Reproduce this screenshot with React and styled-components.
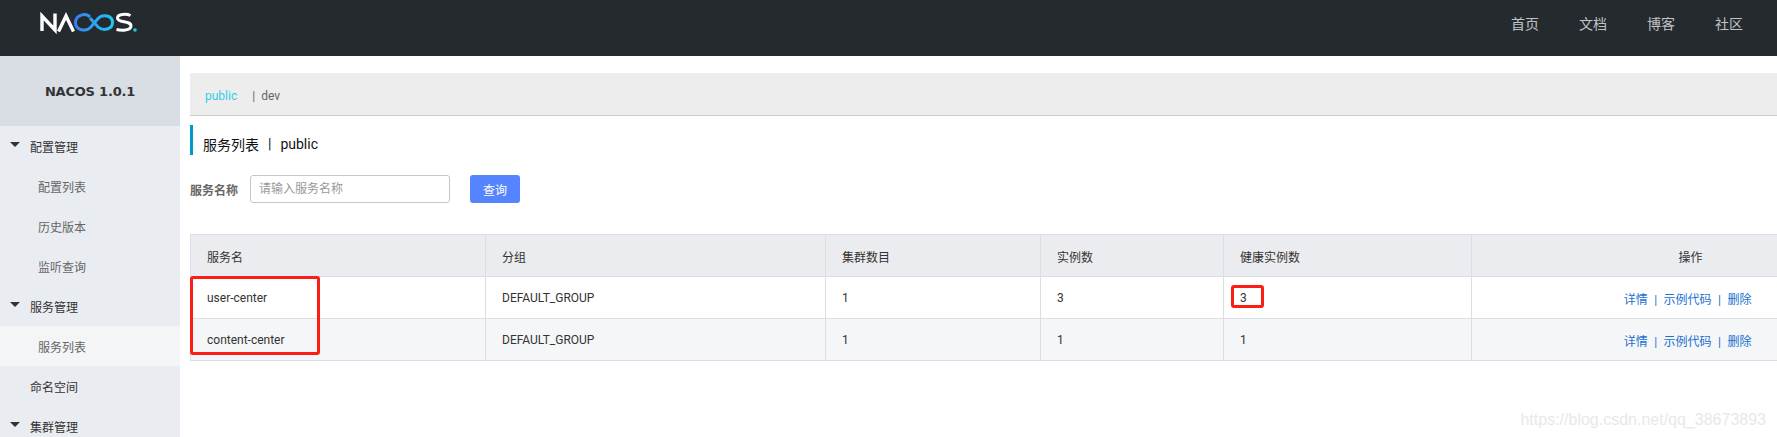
import styled, { createGlobalStyle } from "styled-components";

const CJK = `Roboto, "Noto Sans CJK SC", sans-serif`;

const GlobalStyled = createGlobalStyle`
  * {
    box-sizing: border-box;
  }

  html,
  body {
    margin: 0;
    height: 437px;
    overflow: hidden;
    background-color: #ffffff;
    font-family: ${CJK};
  }
`;

const Header = styled.header`
  height: 56px;
  background-color: #252a2f;
  display: flex;
  align-items: flex-start;
  justify-content: space-between;
  padding: 0 34px 0 40px;
`;

const LogoSvg = styled.svg`
  margin-top: 12px;
  display: block;
`;

const Nav = styled.nav`
  display: flex;
  gap: 40px;
  height: 46px;
  align-items: center;
`;

const NavLink = styled.a`
  font-size: 14px;
  color: #c0c3c6;
`;

const Body = styled.div`
  display: flex;
  height: 381px;
  overflow: hidden;
`;

const Sidebar = styled.aside`
  width: 180px;
  flex: none;
  background-color: #e9ecf1;
`;

const Version = styled.div`
  height: 70px;
  background-color: #d9dde4;
  display: flex;
  align-items: center;
  justify-content: center;
  font-family: "DejaVu Sans", sans-serif;
  font-weight: bold;
  font-size: 13px;
  letter-spacing: -0.2px;
  color: #333333;
`;

const MenuItem = styled.div`
  height: 40px;
  display: flex;
  align-items: center;
  font-size: 12px;
  padding-top: 1px;
  padding-left: ${({ $child }) => ($child ? "38px" : "30px")};
  color: ${({ $child }) => ($child ? "#666666" : "#333333")};
  background-color: ${({ $active }) => ($active ? "#f3f5f7" : "transparent")};
  position: relative;
`;

const Caret = styled.span`
  position: absolute;
  left: 10px;
  top: 16px;
  width: 0;
  height: 0;
  border-left: 5px solid transparent;
  border-right: 5px solid transparent;
  border-top: 5px solid #333333;
`;

const Main = styled.main`
  flex: 1;
  min-width: 0;
  padding: 17px 0 0 10px;
`;

const TabBar = styled.div`
  height: 43px;
  background-color: #ededed;
  border-bottom: 1px solid #cccccc;
  display: flex;
  align-items: center;
  padding: 4px 0 0 15px;
  font-size: 12px;
  color: #666666;
`;

const ActiveTab = styled.span`
  color: #33cde5;
  margin-right: 15px;
`;

const TabSep = styled.span`
  margin-right: 6px;
`;

const TitleBar = styled.div`
  margin-top: 9px;
  height: 30px;
  border-left: 3px solid #0099cc;
  padding: 7px 0 0 10px;
  font-size: 14px;
  color: #111111;
  display: flex;
  align-items: center;
  gap: 9px;
`;

const SearchForm = styled.form`
  margin-top: 20px;
  display: flex;
  align-items: center;
  height: 28px;
`;

const FieldLabel = styled.label`
  width: 60px;
  font-size: 12px;
  font-weight: bold;
  color: #666666;
`;

const SearchInput = styled.input`
  width: 200px;
  height: 28px;
  border: 1px solid #c4c6cf;
  border-radius: 3px;
  padding: 0 8px;
  font-family: ${CJK};
  font-size: 12px;
  outline: none;

  &::placeholder {
    color: #999999;
  }
`;

const SearchButton = styled.button`
  margin-left: 20px;
  width: 50px;
  height: 28px;
  border: none;
  border-radius: 3px;
  background-color: #5584ff;
  color: #ffffff;
  font-family: ${CJK};
  font-size: 12px;
`;

const TableWrap = styled.div`
  margin-top: 31px;
  position: relative;
`;

const Table = styled.table`
  width: 1587px;
  table-layout: fixed;
  border-collapse: collapse;
  font-size: 12px;
  color: #333333;
`;

const HeadCell = styled.th`
  height: 42px;
  padding: 1px 16px 0;
  padding-right: ${({ $last }) => ($last ? "75px" : "16px")};
  background-color: #ebecf0;
  border: 1px solid #dcdee3;
  border-right-width: ${({ $last }) => ($last ? "0" : "1px")};
  font-weight: normal;
  text-align: ${({ $last }) => ($last ? "right" : "left")};
`;

const Row = styled.tr`
  background-color: ${({ $even }) => ($even ? "#f5f6f8" : "#ffffff")};
`;

const Cell = styled.td`
  height: 42px;
  padding: 1px 16px 0;
  border: 1px solid #dcdee3;
  border-right-width: ${({ $last }) => ($last ? "0" : "1px")};
  text-align: ${({ $align }) => $align || "left"};
`;

const Actions = styled.span`
  color: #1a6fd0;
  margin-right: 10px;
  word-spacing: 3.5px;
`;

const Highlight = styled.div`
  position: absolute;
  left: ${({ $x }) => $x}px;
  top: ${({ $y }) => $y}px;
  width: ${({ $w }) => $w}px;
  height: ${({ $h }) => $h}px;
  border: 3px solid #fa1e14;
  border-radius: 3px;
`;

const Watermark = styled.div`
  position: absolute;
  right: 11px;
  bottom: 8px;
  font-family: "Liberation Sans", sans-serif;
  font-size: 16px;
  color: #e8e8e8;
`;

const COLUMNS = [
  { key: "name", width: 295, label: "服务名" },
  { key: "group", width: 340, label: "分组" },
  { key: "cluster", width: 215, label: "集群数目" },
  { key: "count", width: 183, label: "实例数" },
  { key: "healthy", width: 248, label: "健康实例数" },
  { key: "ops", width: 306, label: "操作" },
];

const ROWS = [
  { name: "user-center", group: "DEFAULT_GROUP", cluster: 1, count: 3, healthy: 3 },
  { name: "content-center", group: "DEFAULT_GROUP", cluster: 1, count: 1, healthy: 1 },
];

function Logo() {
  return (
    <LogoSvg width="98" height="22" viewBox="0 0 98 22" fill="none">
      <defs>
        <linearGradient id="nacosLoop" x1="0" x2="1" y1="0" y2="0">
          <stop offset="0" stopColor="#3a7df0" />
          <stop offset="1" stopColor="#1fc8f0" />
        </linearGradient>
      </defs>
      <path d="M2 19V4L15 18V1.5" stroke="#fff" strokeWidth="3.4" />
      <path d="M18.5 19.5L26 4L33.5 19.5" stroke="#fff" strokeWidth="3.4" />
      <path
        d="M50 5C46 0.5 35.5 2.5 35.5 10.5C35.5 18.5 46 20 50.5 15.5L58 6.5C63 1.5 72.5 3.5 72.5 10.5C72.5 17.5 63 19.5 58 15L50 6"
        stroke="url(#nacosLoop)"
        strokeWidth="3"
      />
      <path
        d="M90.5 3.5C87 1.8 77.5 1.5 77.5 6C77.5 11.5 91 8 91 14C91 19 80.5 18.5 76.5 17.5"
        stroke="#fff"
        strokeWidth="3"
      />
      <circle cx="95" cy="18" r="1.8" fill="#1fc8f0" />
    </LogoSvg>
  );
}

function App() {
  return (
    <>
      <GlobalStyled />
      <Header>
        <Logo />
        <Nav>
          <NavLink>首页</NavLink>
          <NavLink>文档</NavLink>
          <NavLink>博客</NavLink>
          <NavLink>社区</NavLink>
        </Nav>
      </Header>
      <Body>
        <Sidebar>
          <Version>NACOS 1.0.1</Version>
          <MenuItem><Caret />配置管理</MenuItem>
          <MenuItem $child>配置列表</MenuItem>
          <MenuItem $child>历史版本</MenuItem>
          <MenuItem $child>监听查询</MenuItem>
          <MenuItem><Caret />服务管理</MenuItem>
          <MenuItem $child $active>服务列表</MenuItem>
          <MenuItem>命名空间</MenuItem>
          <MenuItem><Caret />集群管理</MenuItem>
        </Sidebar>
        <Main>
          <TabBar>
            <ActiveTab>public</ActiveTab>
            <TabSep>|</TabSep>
            dev
          </TabBar>
          <TitleBar>
            <span>服务列表</span>
            <span>|</span>
            <span>public</span>
          </TitleBar>
          <SearchForm>
            <FieldLabel>服务名称</FieldLabel>
            <SearchInput placeholder="请输入服务名称" />
            <SearchButton type="button">查询</SearchButton>
          </SearchForm>
          <TableWrap>
            <Table>
              <colgroup>
                {COLUMNS.map((c) => (
                  <col key={c.key} width={c.width} />
                ))}
              </colgroup>
              <thead>
                <tr>
                  {COLUMNS.map((c) => (
                    <HeadCell key={c.key} $last={c.key === "ops"}>
                      {c.label}
                    </HeadCell>
                  ))}
                </tr>
              </thead>
              <tbody>
                {ROWS.map((row, i) => (
                  <Row key={row.name} $even={i % 2 === 1}>
                    <Cell>{row.name}</Cell>
                    <Cell>{row.group}</Cell>
                    <Cell>{row.cluster}</Cell>
                    <Cell>{row.count}</Cell>
                    <Cell>{row.healthy}</Cell>
                    <Cell $last $align="right">
                      <Actions>详情 | 示例代码 | 删除</Actions>
                    </Cell>
                  </Row>
                ))}
              </tbody>
            </Table>
            <Highlight $x={0} $y={42} $w={130} $h={79} />
            <Highlight $x={1041} $y={51} $w={33} $h={23} />
          </TableWrap>
        </Main>
      </Body>
      <Watermark>https://blog.csdn.net/qq_38673893</Watermark>
    </>
  );
}

export default App;
